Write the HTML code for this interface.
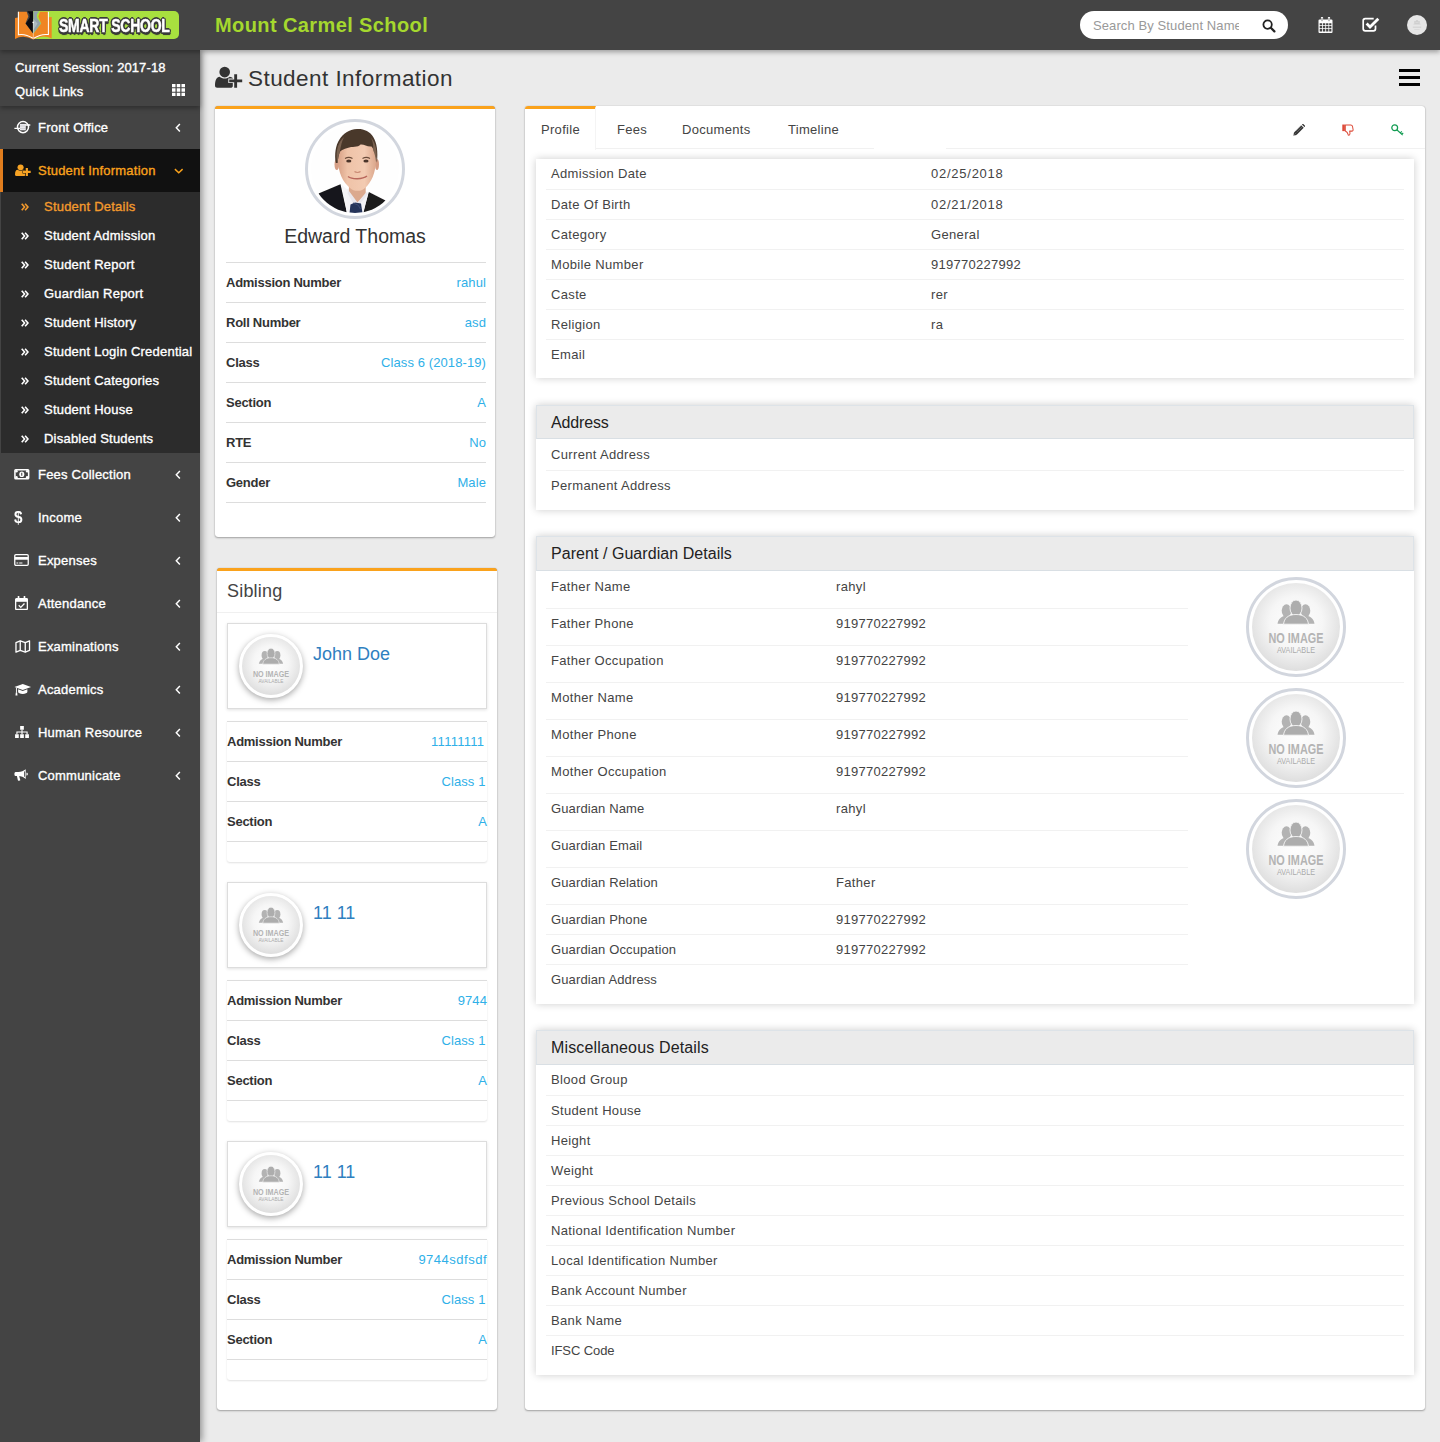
<!DOCTYPE html>
<html lang="en">
<head>
<meta charset="utf-8">
<title>Student Information</title>
<style>
*{box-sizing:border-box;margin:0;padding:0}
html,body{width:1440px;height:1442px;overflow:hidden}
body{font-family:"Liberation Sans",sans-serif;font-size:13px;color:#444;background:#ebebeb;position:relative}
a{text-decoration:none;color:inherit}
svg{display:block}
.abs{position:absolute}

/* ---------- header ---------- */
#hdr{position:absolute;left:0;top:0;width:1440px;height:50px;background:#444;z-index:30;box-shadow:0 2px 5px rgba(0,0,0,.35)}
#logo{position:absolute;left:15px;top:11px;width:164px;height:28px}
#logo .g{position:absolute;left:18px;top:0;width:146px;height:28px;background:#a8e03f;border-radius:0 5px 5px 0}
#logo .txt{position:absolute;left:43.500px;top:4px;font-weight:bold;font-size:18.500px;line-height:22px;color:#fff;white-space:nowrap;transform-origin:0 50%;transform:scaleX(.755);letter-spacing:-.3px;-webkit-text-stroke:.5px #fff;
  text-shadow:-1.5px -1.5px 0 #3a3a3a,1.5px -1.5px 0 #3a3a3a,-1.5px 1.5px 0 #3a3a3a,1.5px 1.5px 0 #3a3a3a,0 2px 0 #3a3a3a,2px 0 0 #3a3a3a,-2px 0 0 #3a3a3a,0 -2px 0 #3a3a3a,1px 2.500px 1px #333}
#school{position:absolute;left:215px;top:13px;font-size:20px;line-height:24px;font-weight:bold;color:#a5d82e;letter-spacing:.4px;white-space:nowrap}
#search{position:absolute;left:1080px;top:11px;width:208px;height:28px;background:#fff;border-radius:14px;overflow:hidden}
#search span{position:absolute;left:13px;top:7px;width:146px;overflow:hidden;white-space:nowrap;font-size:13px;line-height:16px;color:#999;letter-spacing:.1px}
#search svg{position:absolute;left:182px;top:7.5px}
#hdr .ic{position:absolute}
#avatar{position:absolute;left:1407px;top:15px;width:20px;height:20px;border-radius:50%;background:#e6e6e6}

/* ---------- sidebar ---------- */
#side{position:absolute;left:0;top:50px;width:200px;height:1392px;background:#444;z-index:20;box-shadow:2px 0 7px rgba(0,0,0,.4)}
#sess{position:absolute;left:0;top:0;width:200px;height:56px;background:#444;box-shadow:0 2px 5px rgba(0,0,0,.35);z-index:2;color:#fff;font-size:13px;-webkit-text-stroke:.35px #fff}
#sess div{position:absolute;left:15px;white-space:nowrap;line-height:16px;letter-spacing:.1px}
#menu{position:absolute;left:0;top:56px;width:200px;list-style:none}
#menu>li{position:relative;height:43px;color:#fff;font-size:13px;-webkit-text-stroke:.35px currentColor}
#menu>li>.t{position:absolute;left:38px;top:14px;line-height:16px;white-space:nowrap;letter-spacing:.22px}
#menu>li>svg.i{position:absolute;left:15px;top:14px}
#menu>li>svg.a{position:absolute;left:174.500px;top:17px}
#menu>li.sw{height:261px}
#menu>li.act{background:#111;color:#faa21c;border-left:3px solid #e07d1e}
#menu>li.act>.t{left:35px}
#menu>li.act>svg.i{left:12px}
#menu>li.act>svg.a{left:170px}
#sub{list-style:none;background:#2c2c2c;margin-left:1px;height:261px}
#sub li{position:relative;height:29px;color:#fff;font-size:13px;-webkit-text-stroke:.35px currentColor}
#sub li .t{position:absolute;left:43px;top:7px;line-height:16px;white-space:nowrap;letter-spacing:.22px}
#sub li svg{position:absolute;left:20px;top:11px}
#sub li.on{color:#f39a2d}

/* ---------- content ---------- */
#title{position:absolute;left:248px;top:63.500px;font-size:22.5px;line-height:30px;color:#333;white-space:nowrap;letter-spacing:.45px}
#burger{position:absolute;left:1399px;top:69px;width:21px;height:17px}
#burger i{position:absolute;left:0;width:21px;height:3px;background:#000}
.card{position:absolute;background:#fff;border-top:3px solid #faa21c;border-radius:3px;box-shadow:0 1px 2px rgba(0,0,0,.3),0 0 1px rgba(0,0,0,.3)}
.pimg{position:absolute;left:90px;top:10px;width:100px;height:100px;border-radius:50%;border:3px solid #d2d6de;padding:3px;background:#fff;overflow:hidden}
.pname{position:absolute;left:0;width:280px;top:114px;text-align:center;font-size:19.500px;line-height:26px;color:#333;white-space:nowrap}
.lg{position:absolute;left:11px;width:260px;list-style:none}
.lg li{position:relative;height:40px;border-top:1px solid #ddd}
.lg li b{position:absolute;left:0;top:12px;line-height:16px;font-size:13px;color:#333;letter-spacing:-.26px;white-space:nowrap}
.lg li a{position:absolute;right:0;top:12px;line-height:16px;font-size:13px;color:#2fb0e8;letter-spacing:.1px;white-space:nowrap}
.lg li.end{height:1px}
.sibbox{position:absolute;left:10px;width:260px;height:86px;border:1px solid #ddd;background:#fff;box-shadow:0 1px 3px rgba(0,0,0,.12)}
.sibbox .ni{position:absolute;left:11px;top:10px;width:64px;height:64px;border-radius:50%;border:3px solid #fff;box-shadow:0 2px 6px rgba(0,0,0,.35);overflow:hidden;background:#eee}
.sibbox .nm{position:absolute;left:85px;top:18px;font-size:18px;line-height:24px;color:#2f80bf;white-space:nowrap}
.siblist{position:absolute;left:10px;width:260px;height:141px;background:#fff;box-shadow:0 1px 2px rgba(0,0,0,.12);border-radius:0 0 3px 3px}
.siblist .lg{left:0;top:0}

/* ---------- right panel ---------- */
#rp{position:absolute;left:525px;top:106px;width:900px;height:1304px;background:#fff;border-radius:3px;box-shadow:0 1px 2px rgba(0,0,0,.3),0 0 1px rgba(0,0,0,.3)}
#tabs{position:absolute;left:0;top:0;width:900px;height:43px;border-bottom:1px solid #f1f1f1}
#tabs .tb{position:absolute;top:16px;font-size:13px;line-height:16px;color:#444;white-space:nowrap;letter-spacing:.3px}
#tabs .on{position:absolute;left:0;top:0;width:71px;height:44px;background:#fff;border-top:3px solid #faa21c;border-right:1px solid #f4f4f4;border-radius:3px 0 0 0}
.bx{position:absolute;left:11px;width:878px;background:#fff;box-shadow:0 0 8px rgba(0,0,0,.2)}
.bx .hd{position:absolute;left:0;top:0;width:878px;height:34px;background:#ebebeb;border:1px solid #dde3e8;border-bottom-color:#d9dfe4}
.bx .hd span{position:absolute;left:14px;top:7px;font-size:16px;line-height:20px;color:#222;white-space:nowrap;letter-spacing:-.15px}
.tbl{position:absolute;left:10px;width:858px;list-style:none}
.tbl li{position:relative;height:30px;border-top:1px solid #f1f1f1}
.tbl li:first-child{border-top:0;height:29px}
.tbl li:first-child span{top:6px}
.tbl li span{position:absolute;top:7px;line-height:16px;font-size:13px;color:#444;white-space:nowrap;letter-spacing:.34px}
.tbl li span.k{left:5px}
.tbl li span.v{left:385px}
.tbl li span.n{letter-spacing:.28px}
.pg li span.v{left:290px}
.pg li{width:642px}
.pg li.w{width:858px}
.pg li.h37{height:37px}
.pg li.h37:first-child{height:37px}
.pg li.h37 span{top:7px}
.pg li.h37:first-child span{top:8px}
.gimg{position:absolute;left:710px;width:100px;height:100px;border-radius:50%;border:3px solid #d2d6de;padding:3px;background:#fff}
</style>
</head>
<body>

<!-- ================= HEADER ================= -->
<div id="hdr">
  <div id="logo">
    <div class="g"></div>
    <svg width="37" height="29" viewBox="0 0 37 29" style="position:absolute;left:0;top:0;overflow:visible">
      <path d="M0 7.100L2.900 6.600V.8H11.700L13.300 5.400 10.400 12.500 17.700 22.100 18.300 22.600 18.900 22.100 26.200 12.500 23.300 5.400 25 .8H32.900V6.200L36.700 6V27.500Q28.500 23.300 18.300 28.400 8 23.500 0 27.900Z" fill="#f08523"/>
      <path d="M12.300.2H18.200V22.600L10.800 12.500 14.600 6.700V3.300Z" fill="#0c0c10"/>
      <path d="M24.200.2H18.400V22.600L25.800 12.500 22 6.700V3.300Z" fill="#93a3ab"/>
      <path d="M18.400 8L22.500 12.500 18.400 19Z" fill="#aebcc2"/>
      <path d="M3.400.8V23.800Q10.500 22.600 17.800 27.300M33.400.8V23.600Q26 22.600 18.800 27.300" fill="none" stroke="#fff" stroke-width="1.050"/>
      <path d="M18.300 11.500V28.200" stroke="#fff" stroke-width=".5"/>
      <circle cx="18.200" cy="11.400" r=".8" fill="#fff"/>
    </svg>
    <div class="txt">SMART SCHOOL</div>
  </div>
  <div id="school">Mount Carmel School</div>
  <div id="search"><span>Search By Student Name</span>
    <svg width="14" height="14" viewBox="0 0 14 14"><circle cx="5.600" cy="5.600" r="4.200" fill="none" stroke="#222" stroke-width="1.800"/><path d="M8.800 8.800L12.400 12.400" stroke="#222" stroke-width="2.200" stroke-linecap="round"/></svg>
  </div>
  <svg class="ic" style="left:1318px;top:17px" width="15" height="16" viewBox="0 0 15 16"><path fill="#fff" d="M1.5 2.5h12a1 1 0 0 1 1 1V15a1 1 0 0 1-1 1h-12a1 1 0 0 1-1-1V3.500a1 1 0 0 1 1-1z"/><path fill="#444" d="M1.700 6.200h2.500v2H1.700zM5 6.200h2.300v2H5zM8.100 6.200h2.300v2H8.100zM11.200 6.200h2.200v2h-2.200zM1.700 9h2.500v2.200H1.700zM5 9h2.300v2.200H5zM8.100 9h2.300v2.200H8.100zM11.200 9h2.200v2.200h-2.200zM1.700 12h2.500v2.500H1.700zM5 12h2.300v2.500H5zM8.100 12h2.300v2.500H8.100zM11.200 12h2.200v2.500h-2.200z"/><path d="M4 .8v3.400M11 .8v3.400" stroke="#fff" stroke-width="2.200" stroke-linecap="round"/><path d="M4 1.200v2.600M11 1.200v2.600" stroke="#444" stroke-width=".7" stroke-linecap="round"/></svg>
  <svg class="ic" style="left:1362px;top:17px" width="18" height="15" viewBox="0 0 18 15"><path d="M13.500 8.500V11.800a2 2 0 0 1-2 2H3.200a2 2 0 0 1-2-2V3.700a2 2 0 0 1 2-2h8.500" fill="none" stroke="#fff" stroke-width="1.700"/><path d="M4.600 6.600L8 10l8.300-8.300" fill="none" stroke="#fff" stroke-width="2.800"/></svg>
  <div id="avatar"><svg width="20" height="20" viewBox="0 0 20 20"><g fill="#cfcfcf"><circle cx="10" cy="6.300" r="1.300"/><circle cx="8" cy="6.900" r="1"/><circle cx="12" cy="6.900" r="1"/><path d="M6.300 9.600c.3-1.300 1.500-1.900 3.700-1.900s3.400.6 3.700 1.900z"/><path d="M5.800 11.600h8.400v1.500H5.800zM7.300 14h5.400v.8H7.300z" fill="#d6d6d6"/></g></svg></div>
</div>

<!-- ================= SIDEBAR ================= -->
<div id="side">
  <div id="sess">
    <div style="top:10px">Current Session: 2017-18</div>
    <div style="top:34px">Quick Links</div>
    <svg class="abs" style="left:171.500px;top:34px" width="13" height="12" viewBox="0 0 13 12" fill="#fff"><path d="M0 0h3.500v3.300H0zM4.750 0h3.500v3.300h-3.500zM9.500 0H13v3.300H9.500zM0 4.350h3.500v3.300H0zM4.750 4.350h3.500v3.300h-3.500zM9.500 4.350H13v3.300H9.500zM0 8.700h3.500V12H0zM4.750 8.700h3.500V12h-3.500zM9.500 8.700H13V12H9.500z"/></svg>
  </div>
  <ul id="menu">
    <li><svg class="i" style="left:14px;top:14px" width="17" height="14" viewBox="0 0 17 14"><circle cx="9" cy="7.100" r="5.550" fill="none" stroke="#fff" stroke-width="1.500"/><path d="M5.900 3.900h5.900v6.400H5.900z" fill="#e9e9ee"/><path d="M5.900 5.500h5.900M5.900 8.300h5.900" stroke="#fff" stroke-width=".35" opacity=".0"/><path d="M11 4.300h5.300v1.400H11zM.4 7.700H6v1.400H.4z" fill="#fff"/><path d="M5.900 5.750h5.900v.5H5.900zM5.900 7.950h5.900v.5H5.900z" fill="#bbb"/></svg><span class="t">Front Office</span><svg class="a" width="6" height="9.500" viewBox="0 0 7 11"><path d="M5.700 1L1.500 5.500l4.200 4.500" fill="none" stroke="#fff" stroke-width="1.700"/></svg></li>
    <li class="act"><svg class="i" style="left:11.900px;top:15.300px" width="15.700" height="12" viewBox="0 0 27.300 22" preserveAspectRatio="none" fill="#f7a324"><circle cx="9.700" cy="6.100" r="5.300"/><path d="M2.200 21.800C.8 21.800 0 21 0 19.600 0 14 1.600 10.800 4.600 10.700 6 11.900 7.700 12.500 9.700 12.500s3.700-.6 5.100-1.800c1.200.05 2.200.5 3 1.400V20c0 1-.8 1.800-2.300 1.800z"/><path d="M18.700 7.200h3.800v5.200h4.800v4.200h-4.800v5.200h-3.800v-5.200h-5.500v-4.200h5.500z" stroke="#111" stroke-width="1.600" paint-order="stroke"/></svg><span class="t">Student Information</span><svg class="a" width="9.500" height="6" viewBox="0 0 11 7" style="top:19px;left:171px"><path d="M1 1.300L5.500 5.500 10 1.300" fill="none" stroke="#faa21c" stroke-width="1.700"/></svg></li>
    <li class="sw"><ul id="sub">
      <li class="on"><svg width="8" height="8" viewBox="0 0 9 9"><path d="M.8.800L4 4.500.8 8.200M4.600.8L7.800 4.500 4.600 8.200" fill="none" stroke="#f39a2d" stroke-width="1.800"/></svg><span class="t">Student Details</span></li>
      <li><svg width="8" height="8" viewBox="0 0 9 9"><path d="M.8.800L4 4.500.8 8.200M4.600.8L7.800 4.500 4.600 8.200" fill="none" stroke="#fff" stroke-width="1.800"/></svg><span class="t">Student Admission</span></li>
      <li><svg width="8" height="8" viewBox="0 0 9 9"><path d="M.8.800L4 4.500.8 8.200M4.600.8L7.800 4.500 4.600 8.200" fill="none" stroke="#fff" stroke-width="1.800"/></svg><span class="t">Student Report</span></li>
      <li><svg width="8" height="8" viewBox="0 0 9 9"><path d="M.8.800L4 4.500.8 8.200M4.600.8L7.800 4.500 4.600 8.200" fill="none" stroke="#fff" stroke-width="1.800"/></svg><span class="t">Guardian Report</span></li>
      <li><svg width="8" height="8" viewBox="0 0 9 9"><path d="M.8.800L4 4.500.8 8.200M4.600.8L7.800 4.500 4.600 8.200" fill="none" stroke="#fff" stroke-width="1.800"/></svg><span class="t">Student History</span></li>
      <li><svg width="8" height="8" viewBox="0 0 9 9"><path d="M.8.800L4 4.500.8 8.200M4.600.8L7.800 4.500 4.600 8.200" fill="none" stroke="#fff" stroke-width="1.800"/></svg><span class="t">Student Login Credential</span></li>
      <li><svg width="8" height="8" viewBox="0 0 9 9"><path d="M.8.800L4 4.500.8 8.200M4.600.8L7.800 4.500 4.600 8.200" fill="none" stroke="#fff" stroke-width="1.800"/></svg><span class="t">Student Categories</span></li>
      <li><svg width="8" height="8" viewBox="0 0 9 9"><path d="M.8.800L4 4.500.8 8.200M4.600.8L7.800 4.500 4.600 8.200" fill="none" stroke="#fff" stroke-width="1.800"/></svg><span class="t">Student House</span></li>
      <li><svg width="8" height="8" viewBox="0 0 9 9"><path d="M.8.800L4 4.500.8 8.200M4.600.8L7.800 4.500 4.600 8.200" fill="none" stroke="#fff" stroke-width="1.800"/></svg><span class="t">Disabled Students</span></li>
    </ul></li>
    <li><svg class="i" width="15.600" height="10.500" viewBox="0 0 16 11" style="top:16px;left:14.200px"><rect x=".8" y=".8" width="14.400" height="9.400" rx=".8" fill="none" stroke="#fff" stroke-width="1.600"/><ellipse cx="8" cy="5.500" rx="2.600" ry="3" fill="#fff"/><path d="M7.400 3.800h1.100v3.400H7.400z" fill="#444"/><circle cx="2.400" cy="2.400" r="1.300" fill="#fff"/><circle cx="13.600" cy="2.400" r="1.300" fill="#fff"/><circle cx="2.400" cy="8.600" r="1.300" fill="#fff"/><circle cx="13.600" cy="8.600" r="1.300" fill="#fff"/></svg><span class="t">Fees Collection</span><svg class="a" width="6" height="9.500" viewBox="0 0 7 11"><path d="M5.700 1L1.500 5.500l4.200 4.500" fill="none" stroke="#fff" stroke-width="1.700"/></svg></li>
    <li><span class="i" style="position:absolute;left:14.300px;top:12.500px;font-size:17px;line-height:18px;font-weight:bold;color:#fff;-webkit-text-stroke:0;transform:scaleX(.9);transform-origin:0 0">$</span><span class="t">Income</span><svg class="a" width="6" height="9.500" viewBox="0 0 7 11"><path d="M5.700 1L1.500 5.500l4.200 4.500" fill="none" stroke="#fff" stroke-width="1.700"/></svg></li>
    <li><svg class="i" width="15" height="12" viewBox="0 0 16 13" style="top:15px;left:14.400px"><rect x=".7" y=".7" width="14.600" height="11.600" rx="1.200" fill="none" stroke="#fff" stroke-width="1.400"/><path d="M.7 3.200h14.600v3H.7z" fill="#fff"/><path d="M2.500 9.200h2v1.100h-2zM5.500 9.200h3.500v1.100H5.500z" fill="#fff"/></svg><span class="t">Expenses</span><svg class="a" width="6" height="9.500" viewBox="0 0 7 11"><path d="M5.700 1L1.500 5.500l4.200 4.500" fill="none" stroke="#fff" stroke-width="1.700"/></svg></li>
    <li><svg class="i" width="13" height="14" viewBox="0 0 14 15" style="top:14px"><path d="M1.500 2.800h11a.8.800 0 0 1 .8.800v10a.8.800 0 0 1-.8.800h-11a.8.800 0 0 1-.8-.8v-10a.8.800 0 0 1 .8-.8z" fill="none" stroke="#fff" stroke-width="1.400"/><path d="M.7 3h12.600v3.200H.7z" fill="#fff"/><path d="M3.800.6v3M10.200.6v3" stroke="#fff" stroke-width="1.800" stroke-linecap="round"/><path d="M4 10l2.200 2.200 4-4.200" fill="none" stroke="#fff" stroke-width="1.400"/></svg><span class="t">Attendance</span><svg class="a" width="6" height="9.500" viewBox="0 0 7 11"><path d="M5.700 1L1.500 5.500l4.200 4.500" fill="none" stroke="#fff" stroke-width="1.700"/></svg></li>
    <li><svg class="i" width="15.500" height="13" viewBox="0 0 16 14" style="top:15px"><path d="M.7 2.800L5.300.9l5.400 1.900L15.300.9v10.300l-4.600 1.900-5.400-1.900L.7 13.100z" fill="none" stroke="#fff" stroke-width="1.400" stroke-linejoin="round"/><path d="M5.300.9v10.300M10.700 2.800v10.300" stroke="#fff" stroke-width="1.400"/></svg><span class="t">Examinations</span><svg class="a" width="6" height="9.500" viewBox="0 0 7 11"><path d="M5.700 1L1.500 5.500l4.200 4.500" fill="none" stroke="#fff" stroke-width="1.700"/></svg></li>
    <li><svg class="i" width="17.500" height="12" viewBox="0 0 18 13" style="top:16px;left:14.400px"><path d="M9 0l9 3.300-9 3.300L0 3.300z" fill="#fff"/><path d="M4 5.800v3c0 1.200 2.300 2 5 2s5-.8 5-2v-3L9 7.700z" fill="#fff"/><path d="M2.200 4.200v5.300" stroke="#fff" stroke-width="1"/><path d="M1.500 9.300h1.400l.4 3.200H1.100z" fill="#fff"/></svg><span class="t">Academics</span><svg class="a" width="6" height="9.500" viewBox="0 0 7 11"><path d="M5.700 1L1.500 5.500l4.200 4.500" fill="none" stroke="#fff" stroke-width="1.700"/></svg></li>
    <li><svg class="i" width="14" height="12" viewBox="0 0 15 13" style="top:15.200px;left:14.500px"><path d="M5.500 0h4v4h-4zM0 9h4v4H0zM5.500 9h4v4h-4zM11 9h4v4h-4z" fill="#fff"/><path d="M7.500 4v5M2 9V6.500h11V9" fill="none" stroke="#fff" stroke-width="1.200"/></svg><span class="t">Human Resource</span><svg class="a" width="6" height="9.500" viewBox="0 0 7 11"><path d="M5.700 1L1.500 5.500l4.200 4.500" fill="none" stroke="#fff" stroke-width="1.700"/></svg></li>
    <li><svg class="i" width="14.200" height="12" viewBox="0 0 15 13" style="top:15.400px;left:14.300px"><path d="M12.500.3v10.400C10.500 9 7.500 7.900 4.500 7.700H2.200C1 7.700.3 7 .3 6.200V4.800c0-.8.700-1.500 1.900-1.500h2.300c3-.2 6-1.300 8-3z" fill="#fff"/><path d="M3 7.700h2.400l1.300 4.600c-.9.500-2.200.5-2.700-.2z" fill="#fff"/><path d="M13.300 4h.6c.5 0 .9.700.9 1.500s-.4 1.500-.9 1.500h-.6z" fill="#fff"/><path d="M11.300 2.600v5.800" stroke="#444" stroke-width="1"/></svg><span class="t">Communicate</span><svg class="a" width="6" height="9.500" viewBox="0 0 7 11"><path d="M5.700 1L1.500 5.500l4.200 4.500" fill="none" stroke="#fff" stroke-width="1.700"/></svg></li>
  </ul>
</div>


<svg width="0" height="0" style="position:absolute"><defs>
<radialGradient id="ng" cx="50%" cy="45%" r="55%"><stop offset="0" stop-color="#ffffff"/><stop offset=".55" stop-color="#f6f6f6"/><stop offset="1" stop-color="#dedede"/></radialGradient>
<symbol id="noimg" viewBox="0 0 88 88">
<circle cx="44" cy="44" r="44" fill="url(#ng)"/>
<g transform="translate(0 17) scale(1 1.075) translate(0 -14)"><g fill="#b3b3b3"><ellipse cx="34.500" cy="24" rx="4.800" ry="6"/><ellipse cx="53.500" cy="24" rx="4.800" ry="6"/><path d="M25.500 36c1-4.500 4-7 9-7.500l4 7.500zM62.500 36c-1-4.500-4-7-9-7.500l-4 7.500z"/></g>
<g fill="#adadad" stroke="#f4f4f4" stroke-width=".9"><ellipse cx="44" cy="21.500" rx="6" ry="7.500"/><path d="M31.500 36.500c.8-5.500 4.500-9 12.500-9s11.700 3.500 12.500 9z"/></g></g>
<text x="44" y="60" text-anchor="middle" font-family="Liberation Sans, sans-serif" font-weight="bold" font-size="13.800" fill="#b4b4b4" textLength="55" lengthAdjust="spacingAndGlyphs">NO IMAGE</text>
<text x="44" y="70.400" text-anchor="middle" font-family="Liberation Sans, sans-serif" font-size="8.400" fill="#aaa" textLength="38" lengthAdjust="spacingAndGlyphs">AVAILABLE</text>
</symbol></defs></svg>
<svg class="abs" style="left:215px;top:66px" width="28" height="23" viewBox="0 0 28 23" fill="#333"><circle cx="9.700" cy="6.100" r="5.300"/><path d="M2.200 21.800C.8 21.800 0 21 0 19.600 0 14 1.600 10.800 4.600 10.700 6 11.900 7.700 12.500 9.700 12.500s3.700-.6 5.100-1.800c1.200.05 2.200.5 3 1.400V20c0 1-.8 1.800-2.300 1.800z"/><path d="M19.200 8.200h2.900v5.200h5.100v2.800h-5.100v5.600h-2.900v-5.600h-5v-2.800h5z" stroke="#ebebeb" stroke-width="1.800" paint-order="stroke"/></svg>
<div id="title">Student Information</div>
<div id="burger"><i style="top:0"></i><i style="top:7px"></i><i style="top:14px"></i></div>

<div class="card" style="left:215px;top:106px;width:280px;height:431px">
  <div class="pimg"><svg width="88" height="88" viewBox="0 0 88 88" style="border-radius:50%">
    <defs><filter id="pb" x="-5%" y="-5%" width="110%" height="110%"><feGaussianBlur stdDeviation=".55"/></filter>
    <linearGradient id="sk" x1="0" x2="1"><stop offset="0" stop-color="#d9a287"/><stop offset=".25" stop-color="#efc3a8"/><stop offset=".7" stop-color="#f3cbb2"/><stop offset="1" stop-color="#dba78c"/></linearGradient></defs>
    <rect width="88" height="88" fill="#fefefe"/>
    <g filter="url(#pb)">
    <path d="M7.500 68.500L29.500 59.300 36 88H18Q10 80 7.500 68.500Z" fill="#19181a"/>
    <path d="M57.800 67L74.500 75.400Q68 84 60 88H52Z" fill="#1b1a1c"/>
    <path d="M30.300 59.500L38 66 40 88H36Z" fill="#f6f5f7"/>
    <path d="M36 64L57.500 67 52.400 88H35.800Z" fill="#f4f3f6"/>
    <path d="M37.900 58H54.700V70L46 78 37.900 68Z" fill="#dba98e"/>
    <path d="M38 66L46.500 77.500 55 67.500 57 69 48 80H43L36.500 68Z" fill="#e9e7ec"/>
    <path d="M39.500 79.500L44 77.500 50 78.500 51.500 88H38.500Z" fill="#27355a"/>
    <path d="M42 78L47 80 49.500 84" fill="none" stroke="#3d4c74" stroke-width="1"/>
    <ellipse cx="25.800" cy="39.500" rx="2.300" ry="5.500" fill="#d79f86"/>
    <ellipse cx="66" cy="39.500" rx="2" ry="5.500" fill="#d59c83"/>
    <path d="M27 34C27 20 36 13 46 13 57 13 65 20 65 34 65 48 60 58 54 63 50 66.800 43 66.800 39 63 32 57 27 48 27 34Z" fill="url(#sk)"/>
    <path d="M24.800 38C22 20 30 5 46 4 60 3.500 68.500 14 66 38 65.200 30 63.500 25 60.500 21.500 56 22 53 19 49.500 19.500 47 23 41 21 36.500 23 33 24 30 25 28.800 27 27.500 31 27 34 26.600 38Z" fill="#4a382c"/>
    <path d="M26 36C24.500 25 27.500 17 33 12 30 18 29.500 24 28.800 27 27.500 31 27 34 26.600 38ZM65.500 36C66.500 26 64.500 18 60 12.500 62.500 18 62.500 23 62 25 63.500 28 64.500 32 65 37Z" fill="#7a6250"/>
    <path d="M34 33.500C36 32.300 39.500 32.300 41.500 33.500M51.500 33.500C53.500 32.300 57 32.300 59 33.500" fill="none" stroke="#6b4c3a" stroke-width="1.100"/>
    <ellipse cx="37.800" cy="36" rx="2.600" ry="1.500" fill="#4c3429"/><ellipse cx="55" cy="36" rx="2.600" ry="1.500" fill="#4c3429"/>
    <path d="M43.500 46.500C45 47.800 48 47.800 49.500 46.500" fill="none" stroke="#c98b74" stroke-width="1.200"/>
    <path d="M37 51.500C41 54.500 51.500 54.500 56 51" fill="none" stroke="#b8675c" stroke-width="1.500"/>
    </g>
  </svg></div>
  <div class="pname">Edward Thomas</div>
  <ul class="lg" style="top:153px"><li><b>Admission Number</b><a>rahul</a></li><li><b>Roll Number</b><a>asd</a></li><li><b>Class</b><a>Class 6 (2018-19)</a></li><li><b>Section</b><a>A</a></li><li><b>RTE</b><a>No</a></li><li><b>Gender</b><a>Male</a></li><li class="end"></li></ul>
</div>

<div class="card" style="left:217px;top:568px;width:280px;height:842px">
  <div class="abs" style="left:10px;top:7.500px;font-size:18px;line-height:24px;color:#444;letter-spacing:.2px">Sibling</div>
  <div class="abs" style="left:0;top:41px;width:280px;height:1px;background:#f0f0f0"></div>
  <div class="sibbox" style="top:52px"><div class="ni"><svg width="58" height="58"><use href="#noimg"/></svg></div><div class="nm">John Doe</div></div>
  <div class="siblist" style="top:150px"><ul class="lg" style="top:0px"><li><b>Admission Number</b><a style="letter-spacing:.25px;right:2.800px">11111111</a></li><li><b>Class</b><a style="right:1.500px">Class 1</a></li><li><b>Section</b><a>A</a></li><li class="end"></li></ul></div>
  <div class="sibbox" style="top:311px"><div class="ni"><svg width="58" height="58"><use href="#noimg"/></svg></div><div class="nm">11 11</div></div>
  <div class="siblist" style="top:409px"><ul class="lg" style="top:0px"><li><b>Admission Number</b><a>9744</a></li><li><b>Class</b><a style="right:1.500px">Class 1</a></li><li><b>Section</b><a>A</a></li><li class="end"></li></ul></div>
  <div class="sibbox" style="top:570px"><div class="ni"><svg width="58" height="58"><use href="#noimg"/></svg></div><div class="nm">11 11</div></div>
  <div class="siblist" style="top:668px"><ul class="lg" style="top:0px"><li><b>Admission Number</b><a style="letter-spacing:.5px">9744sdfsdf</a></li><li><b>Class</b><a style="right:1.500px">Class 1</a></li><li><b>Section</b><a>A</a></li><li class="end"></li></ul></div>
</div>

<div id="rp">
  <div id="tabs">
    <div class="on"></div>
    <span class="tb" style="left:16px">Profile</span>
    <span class="tb" style="left:92px">Fees</span>
    <span class="tb" style="left:157px">Documents</span>
    <span class="tb" style="left:263px">Timeline</span>
    <div class="abs" style="left:349px;top:42px;width:72px;height:1px;background:#fff"></div>
    <svg class="abs" style="left:768px;top:17.700px" width="12" height="12" viewBox="0 0 12 12"><path d="M.3 11.700l.7-3.200L8.200 1.300l2.500 2.500L3.500 11zM8.900.6l.4-.4c.4-.3.900-.3 1.200 0l1.300 1.300c.3.300.3.800 0 1.200l-.4.400z" fill="#333"/><path d="M1.500 8.600l2 2M2.600 7.300l6-6M3.700 8.400l6-6" stroke="#fff" stroke-width=".45" opacity=".55"/><path d="M.5 11.500l.35-1.300.95.950z" fill="#fff"/></svg><svg class="abs" style="left:816.500px;top:17.800px" width="12" height="13.300" viewBox="0 0 12 12.500" preserveAspectRatio="none"><path d="M3.300 6.500V.9h5.400c.9 0 1.600.4 1.800 1.300l.6 3c.2.900-.4 1.500-1.200 1.500H7.600c.25.850.45 1.600.35 2.500-.1.850-.5 1.450-1.150 1.450-.55 0-.75-.45-.85-1.150-.2-1.200-.9-2.100-2.650-3z" fill="none" stroke="#dd4b39" stroke-width="1" stroke-linejoin="round"/><path d="M.3.500h2.600v6.200H.3z" fill="#dd4b39"/></svg><svg class="abs" style="left:865.500px;top:17.700px" width="13" height="12" viewBox="0 0 13 12"><circle cx="3.700" cy="3.700" r="2.900" fill="none" stroke="#129c52" stroke-width="1.250"/><path d="M5.800 5.800l5.900 5.300M9.300 8.900l1.500-1.600M10.900 10.300l1.300-1.400" fill="none" stroke="#129c52" stroke-width="1.150"/></svg>
  </div>
  <div class="bx" style="top:53px;height:219px">
    <ul class="tbl " style="top:1px"><li class=""><span class="k">Admission Date</span><span class="v n" style="letter-spacing:.75px">02/25/2018</span></li><li class=""><span class="k">Date Of Birth</span><span class="v n" style="letter-spacing:.75px">02/21/2018</span></li><li class=""><span class="k">Category</span><span class="v">General</span></li><li class=""><span class="k">Mobile Number</span><span class="v n">919770227992</span></li><li class=""><span class="k">Caste</span><span class="v">rer</span></li><li class=""><span class="k">Religion</span><span class="v">ra</span></li><li class=""><span class="k">Email</span></li></ul>
  </div>
  <div class="bx" style="top:299px;height:105px">
    <div class="hd"><span>Address</span></div>
    <ul class="tbl " style="top:36px"><li class=""><span class="k">Current Address</span></li><li class=""><span class="k">Permanent Address</span></li></ul>
  </div>
  <div class="bx" style="top:430px;height:468px">
    <div class="hd" style="height:35px"><span style="letter-spacing:.05px">Parent / Guardian Details</span></div>
    <ul class="tbl pg" style="top:35px"><li class="h37"><span class="k">Father Name</span><span class="v">rahyl</span></li><li class="h37"><span class="k">Father Phone</span><span class="v n">919770227992</span></li><li class="h37"><span class="k">Father Occupation</span><span class="v n">919770227992</span></li><li class="h37 w"><span class="k">Mother Name</span><span class="v n">919770227992</span></li><li class="h37"><span class="k">Mother Phone</span><span class="v n">919770227992</span></li><li class="h37"><span class="k">Mother Occupation</span><span class="v n">919770227992</span></li><li class="h37 w"><span class="k" style="letter-spacing:.12px">Guardian Name</span><span class="v">rahyl</span></li><li class="h37"><span class="k" style="letter-spacing:.12px">Guardian Email</span></li><li class="h37"><span class="k" style="letter-spacing:.12px">Guardian Relation</span><span class="v">Father</span></li><li class=""><span class="k" style="letter-spacing:.12px">Guardian Phone</span><span class="v n">919770227992</span></li><li class=""><span class="k" style="letter-spacing:.12px">Guardian Occupation</span><span class="v n">919770227992</span></li><li class=""><span class="k" style="letter-spacing:.12px">Guardian Address</span></li></ul>
    <div class="gimg" style="top:41px"><svg width="88" height="88"><use href="#noimg"/></svg></div>
    <div class="gimg" style="top:152px"><svg width="88" height="88"><use href="#noimg"/></svg></div>
    <div class="gimg" style="top:263px"><svg width="88" height="88"><use href="#noimg"/></svg></div>
  </div>
  <div class="bx" style="top:924px;height:345px">
    <div class="hd" style="height:35px"><span style="letter-spacing:.15px">Miscellaneous Details</span></div>
    <ul class="tbl " style="top:36px"><li class=""><span class="k">Blood Group</span></li><li class=""><span class="k">Student House</span></li><li class=""><span class="k">Height</span></li><li class=""><span class="k">Weight</span></li><li class=""><span class="k">Previous School Details</span></li><li class=""><span class="k">National Identification Number</span></li><li class=""><span class="k">Local Identification Number</span></li><li class=""><span class="k">Bank Account Number</span></li><li class=""><span class="k">Bank Name</span></li><li class=""><span class="k" style="letter-spacing:-.1px">IFSC Code</span></li></ul>
  </div>
</div>


</body>
</html>
